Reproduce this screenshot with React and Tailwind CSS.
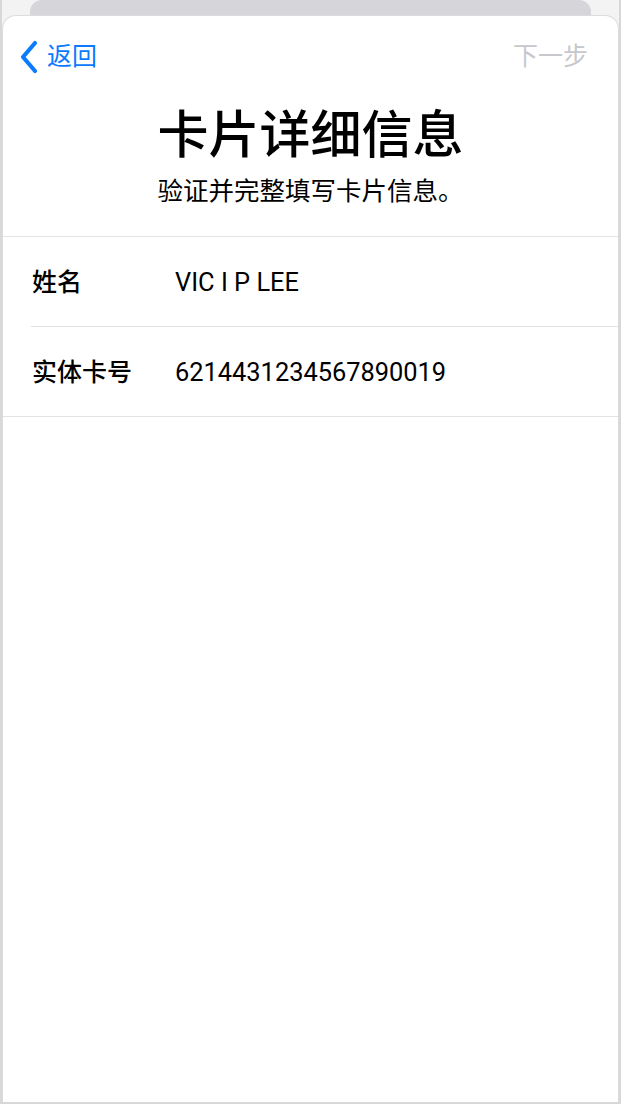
import React from 'react';

const font = { fontFamily: 'Roboto, "Noto Sans CJK SC", sans-serif' };

function Row({ label, value, last }) {
  return (
    <div className={last ? 'flex h-[90px] items-center border-b border-[#e2e2e4] pl-[29px] pt-[3px]' : 'flex h-[89px] items-center pl-[29px] pt-[3px]'}>
      <div className="w-[143px] text-[25px] font-medium text-black">{label}</div>
      <div className="text-[25.4px] text-black">{value}</div>
    </div>
  );
}

function App() {
  return (
    <div style={font} className="flex h-[1104px] w-[621px] flex-col overflow-hidden border-x-2 border-b-2 border-[#d8d8d8] bg-[#f3f3f3]">
      {/* card stacked behind */}
      <div className="mx-[28px] h-[15px] shrink-0 rounded-t-[12px] bg-[#d5d5da]"></div>

      <div className="flex flex-1 flex-col rounded-t-[14px] border-x border-t border-[#dcdcdc] bg-white">
        {/* nav */}
        <div className="mt-[19px] flex h-[44px] items-center justify-between pl-[16px] pr-[30px]">
          <button className="flex items-center gap-[8px] text-[#0a7aff]">
            <svg width="20" height="34" viewBox="0 0 20 34" fill="none">
              <path d="M16 3 L4 17 L16 31" stroke="#0a7aff" strokeWidth="4.2" strokeLinecap="round" strokeLinejoin="round" />
            </svg>
            <span className="text-[25px]">返回</span>
          </button>
          <span className="text-[25px] text-[#c7c7cc]">下一步</span>
        </div>

        {/* heading */}
        <div className="flex flex-col items-center border-b border-[#e2e2e4] pb-[31px]">
          <h1 className="mt-[31px] text-[51px] font-medium leading-none text-black">卡片详细信息</h1>
          <p className="mt-[18px] text-[25.5px] leading-none text-black">验证并完整填写卡片信息。</p>
        </div>

        {/* fields */}
        <div>
          <Row label="姓名" value="VIC I P LEE" />
          <div className="ml-[28px] border-b border-[#e2e2e4]"></div>
          <Row label="实体卡号" value="6214431234567890019" last />
        </div>
      </div>
    </div>
  );
}

export default App;
